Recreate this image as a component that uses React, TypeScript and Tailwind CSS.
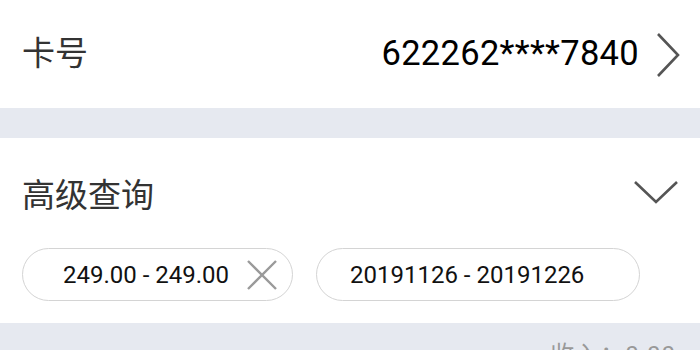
import React from 'react';

const font = { fontFamily: 'Roboto, "Noto Sans CJK SC", sans-serif' };

const App: React.FC = () => {
    return (
        <div className="w-[700px] h-[350px] overflow-hidden bg-[#e6e9f0]" style={font}>
            {/* Card number */}
            <div className="h-[108px] bg-white flex items-center pl-[22px] pr-[20px]">
                <span className="text-[33px] text-[#333]">卡号</span>
                <span className="ml-auto text-[34.5px] text-black tracking-[0.3px]">622262****7840</span>
                <svg width="24" height="46" viewBox="0 0 24 46" className="ml-[17px] mt-[1px]">
                    <polyline points="2,2 22,23 2,44" fill="none" stroke="#555" strokeWidth="2.6" />
                </svg>
            </div>

            {/* Advanced search */}
            <div className="mt-[30px] bg-white pt-[36px] pb-[22px]">
                <div className="h-[44px] flex items-center pl-[22px] pr-[21px]">
                    <span className="text-[33px] text-[#333]">高级查询</span>
                    <svg width="46" height="24" viewBox="0 0 46 24" className="ml-auto mb-[8px]">
                        <polyline points="2,2 23,22 44,2" fill="none" stroke="#555" strokeWidth="2.6" />
                    </svg>
                </div>
                <div className="mt-[30px] flex pl-[22px] gap-[23px]">
                    <div className="w-[271px] h-[53px] rounded-full border-[1.5px] border-[#d4d4d4] flex items-center pl-[40px] pr-[14px]">
                        <span className="text-[24px] text-[#111]">249.00 - 249.00</span>
                        <svg width="32" height="32" viewBox="0 0 32 32" className="ml-auto">
                            <path d="M2 2 L30 30 M30 2 L2 30" stroke="#9a9a9a" strokeWidth="2.4" fill="none" />
                        </svg>
                    </div>
                    <div className="w-[324px] h-[53px] rounded-full border-[1.5px] border-[#d4d4d4] flex items-center pl-[33px]">
                        <span className="text-[24px] text-[#111]">20191126 - 20191226</span>
                    </div>
                </div>
            </div>

            <div className="flex justify-end pr-[24px] pt-[14px]">
                <span className="text-[24px] text-[#999] tracking-[1px]">收入：0.00</span>
            </div>
        </div>
    );
};

export default App;
